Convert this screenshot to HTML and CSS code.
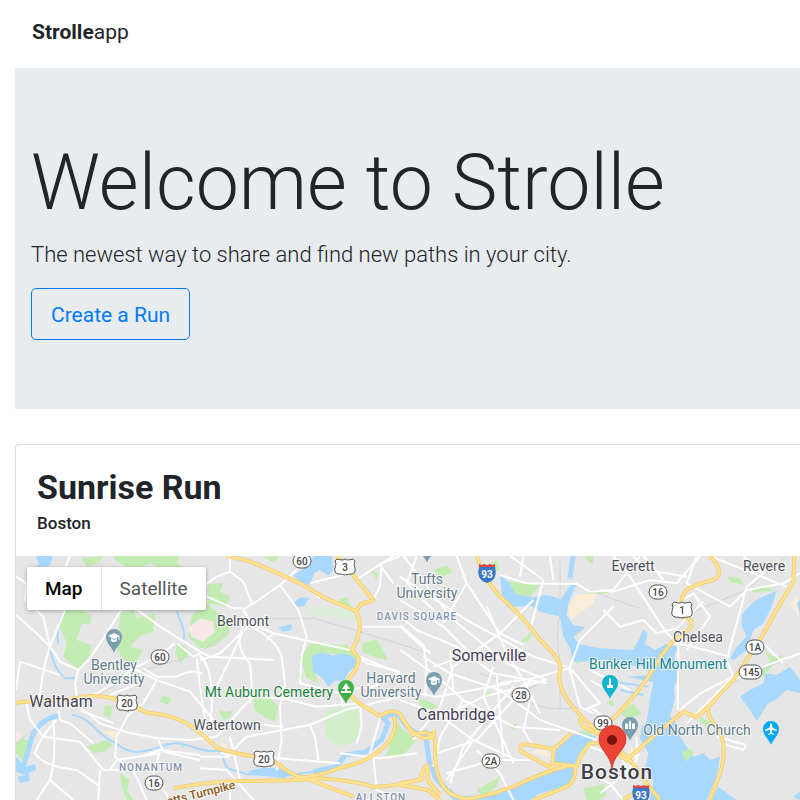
FILE: index.html
```html
<!DOCTYPE html>
<html lang="en">
<head>
<meta charset="utf-8">
<meta name="viewport" content="width=device-width, initial-scale=1">
<title>Strolleapp</title>
<link rel="stylesheet" href="styles.css">
</head>
<body>
<header class="navbar"><a class="brand" href="#"><strong>Strolle</strong>app</a></header>
<main class="content">
  <section class="hero">
    <h1 class="hero-title">Welcome to Strolle</h1>
    <p class="lead">The newest way to share and find new paths in your city.</p>
    <button class="btn" type="button">Create a Run</button>
  </section>
  <article class="card">
    <div class="card-head">
      <h2 class="card-title">Sunrise Run</h2>
      <p class="card-city">Boston</p>
    </div>
    <div class="map">
      <svg class="map-canvas" viewBox="16 556 784 244" preserveAspectRatio="xMinYMin slice" role="img" aria-label="Map of Boston">
        <defs>
          <path id="drop" d="M0 16C-1 11-8 7-8 0A8 8 0 0 1 8 0C8 7 1 11 0 16Z"/>
          <g id="school"><use href="#drop" fill="#7b9eb0"/><path d="M-6-1L0-4L6-1L0 2ZM-3 1L0 3L3 1V4Q0 6-3 4Z" fill="#fff"/><path d="M5-1V3" stroke="#fff"/></g>
          <path id="us" d="M-8-8Q-5-7-2-7L0-8L2-7Q5-7 8-8L10-6Q8-3 10 1Q11 6 7 7Q3 7 0 8Q-3 7-7 7Q-11 6-10 1Q-8-3-10-6Z" fill="#fff" stroke="#555"/>
          <g id="interstate"><path d="M-8-5H8Q11 8 0 11Q-11 8-8-5Z" fill="#3a77c8"/><path d="M-8-8L-5-7L-3-8L0-7L3-8L5-7L8-8V-5H-8Z" fill="#d94545"/></g>
          <g id="roads-yellow">
            <path d="M680 48C760 60 820 95 900 130C930 145 950 165 1000 185L1068 213"/>
            <path d="M1010 48L1070 118L1120 180L1082 193L1068 213Q1085 250 1078 270Q1072 310 1055 328L1077 355Q1075 385 1045 418L1035 450L1080 492L1140 528L1165 515Q1195 510 1205 530Q1230 580 1270 594Q1310 595 1300 570"/>
            <path d="M1430 48Q1450 115 1500 170Q1570 230 1620 300Q1680 355 1682 385Q1665 430 1710 490Q1740 530 1790 570L1890 660L1940 730L1980 780"/>
            <path d="M48 488L110 482Q200 480 250 470Q330 462 380 492Q410 500 440 518Q500 520 560 550Q620 590 650 624Q700 640 770 650Q830 660 850 685Q900 720 950 720"/>
            <path d="M520 745Q620 725 720 723Q850 725 960 715Q1050 720 1120 740Q1190 740 1270 715"/>
            <path d="M880 715Q960 710 1020 683Q1120 665 1170 600Q1195 555 1180 530"/>
            <path d="M930 720L1060 770"/><path d="M1200 525L1240 585Q1290 565 1307 600Q1300 680 1320 720Q1340 770 1400 777Q1450 772 1540 740Q1600 710 1660 690Q1720 670 1730 680Q1740 640 1770 610L1810 610"/>
            <path d="M1655 685L1562 633Q1555 610 1580 613L1662 627L1655 685M1662 627L1715 580M1655 670L1725 678Q1730 720 1700 740L1600 780"/>
            <path d="M1200 730L1260 720Q1270 680 1282 675V720L1320 765M1200 735L1285 750L1320 780"/>
            <path d="M2130 48Q2180 100 2140 120Q2080 135 2060 150Q2035 175 2048 230Q2095 240 2060 275Q2010 300 1970 370Q1925 450 1840 535L1790 565"/>
            <path d="M2383 48L2380 125L2330 210L2280 300L2200 420L2125 500L2090 532L2050 515L1970 580L1880 660L1800 610M2125 500Q2120 530 2155 570Q2185 620 2160 700L2130 780"/>
            <path d="M1750 530Q1730 540 1750 560L1810 590M1870 780L1910 755"/>
          </g>
        </defs>
        <rect class="land" x="0" y="540" width="800" height="280"/>
        <g class="terrain" transform="translate(0 540) scale(.3333333)">
          <g class="park">
            <path d="M245 55L310 48L300 65L260 80ZM340 48H540L530 70L560 85L470 80L450 70L400 90L350 65Z"/>
            <path d="M195 210L240 205L275 230L270 255L245 250L230 300L275 315L270 345L235 390L190 350L200 310L175 250ZM360 220L400 210L410 235L465 220L460 275L415 290L390 320L430 330L400 375L370 360L350 320L355 285ZM530 305L555 320L570 340L540 370L525 340ZM485 465L515 475L505 495L480 485ZM315 495L340 500L330 535L310 525ZM48 590L85 600L90 650L70 665L48 640ZM260 620L320 600L340 615L310 635L280 640ZM360 700L390 720L380 750L400 780H380L365 745ZM610 180L690 250L685 285L640 320L600 325L565 290L575 230ZM540 605L560 615L545 625Z"/>
            <path d="M625 132L670 128L660 155L690 170L675 200L625 190ZM790 50L840 48L820 68ZM660 395L680 390L670 410ZM655 510L680 515L700 510L690 530L670 540ZM760 470L800 465L835 500L825 545L790 530L765 510ZM930 310L1040 315L1065 335L1070 360L1030 345L980 340L945 345L940 380L955 430L920 415L900 350ZM1015 180L1040 170L1055 200L1030 200ZM1090 310L1130 298L1165 360L1120 350L1085 335ZM1190 545L1230 600L1210 650L1155 650L1175 600ZM890 400L910 405L900 430ZM1110 85L1135 100L1130 120Z"/>
            <path d="M1300 90L1340 75L1360 95L1325 110ZM1450 80L1490 60L1500 90L1470 100ZM1510 120L1560 130L1620 135L1590 170L1550 170L1520 155ZM1560 305L1600 270L1585 305ZM1250 470L1290 485L1320 505L1270 510ZM1445 460L1475 455L1470 470L1450 475ZM1525 560L1550 550L1545 570ZM1430 750L1500 710L1490 740L1450 770ZM1720 580L1790 565L1770 590ZM1750 50L1780 48V75ZM1765 150H1825V160H1765ZM1200 560L1250 600L1215 640L1200 635ZM1750 745L1810 735L1820 770L1760 780ZM1720 350L1745 355L1730 375Z"/>
            <path d="M1770 150H1810V162H1770ZM1900 320L1920 300L1945 330L1960 350L1910 340ZM1860 520L1900 490L1925 525L1880 535ZM2180 110L2220 115L2230 135L2190 125ZM2235 145L2290 140L2325 150L2270 158ZM2295 330L2320 350L2350 345L2320 375L2290 410L2285 390L2310 370ZM2100 530L2130 545L2125 565L2100 545ZM1820 490L1840 480V500ZM1770 745L1815 730L1800 780H1770Z"/>
          </g>
          <path class="meadow" d="M930 200L1030 205L1080 225L1070 240L970 230L910 220Z"/>
          <path class="cemetery" d="M975 515L1030 500L1080 515L1075 600L1020 620L975 590Z"/>
          <path class="sand" d="M1705 200L1730 165L1790 160L1780 190L1710 240ZM300 570L355 575L345 595ZM2370 190L2395 170V230ZM660 600L685 620L670 635ZM1880 630L1900 620V660ZM1600 630L1640 630L1650 650L1600 640Z"/>
          <path class="blush" d="M600 235L640 245L645 275L610 305L575 290L565 265ZM48 570L65 580L60 605H48Z"/>
          <g class="water">
            <path d="M108 48H160L150 75L130 85L122 103L103 95L117 72ZM48 650L75 680L105 672L108 690L85 700L90 722L60 730L52 710L75 705L48 695Z"/>
            <path d="M880 105L905 90L935 62L940 48H995L1000 90L985 107L960 90L942 100L930 135L905 130ZM885 185Q900 165 928 175L915 195Q900 205 885 195ZM835 262L875 252V270L848 275ZM935 350Q960 330 1000 347Q1025 330 1067 357L1070 375L1043 400L1035 422H1005L985 440L968 415L940 395ZM738 695L790 683L840 685L875 705L850 715L780 705Z"/>
            <path d="M1500 105L1530 130L1545 162L1600 172L1640 165L1683 177L1715 130L1730 132L1705 190L1700 225L1720 255L1755 262L1722 290L1735 312L1800 325L1900 330L1912 310L1930 268L1943 280L1935 312L1965 330L2000 312L2035 320L2022 350L2038 400L2022 445L2025 475L2010 530L2030 550L2040 590L2060 620L2080 650L2110 640L2130 660L2160 650L2150 710L2120 780H1950L1960 725L1935 690L1945 640L1920 595L1925 560L1940 545L1950 480L1960 425L1880 410L1960 405L1930 380L1880 375L1820 360L1740 365L1718 362L1710 325L1690 290L1680 230L1620 215L1595 198L1520 200L1505 160Z"/>
            <path d="M1655 640L1705 585L1750 580L1790 590L1740 635L1722 678L1718 725L1680 745L1620 760L1590 780H1460L1550 735L1650 690L1725 675L1660 665Z"/>
            <path d="M2225 225L2260 185L2300 165L2330 152L2315 200L2290 250L2260 270L2240 330L2200 360L2190 355L2210 320L2240 290L2225 255ZM2220 470L2250 450L2290 430L2295 400L2330 405L2370 380L2400 420V460L2360 450L2335 475L2305 490L2270 542L2250 510ZM2155 740L2210 780H2130ZM2380 770L2400 755V780ZM2390 190L2400 180V220Z"/>
          </g>
          <path class="park" d="M2045 635L2070 625L2080 640L2060 665L2050 650Z"/>
          <g class="river">
            <path class="river-wide" d="M175 527C140 533 110 555 94 595C85 635 78 650 70 680M1719 48L1710 115M1345 750L1370 777L1500 770M940 695L1010 680L1035 645L1100 635L1145 598L1165 550L1150 535Q1190 508 1210 545Q1240 590 1275 577L1287 660L1307 715L1365 775"/>
            <path d="M215 525C270 530 290 580 330 600C360 615 380 640 420 635C470 630 480 615 520 610C560 605 600 640 655 632C675 640 665 670 685 685L740 702L850 708L940 695M195 210Q165 260 175 310M150 330Q165 390 190 410M530 215Q560 280 550 300M190 415H230M1840 425L1945 440M1860 450L1930 465"/>
          </g>
          <g class="rail"><path d="M48 610Q100 570 120 550M290 465Q400 410 450 385L600 340L690 270M805 235H940L1080 275L1270 335M1440 400Q1540 430 1570 480Q1640 520 1760 500M1680 60V220Q1665 290 1680 370V510M1500 490L1620 430M1770 150Q1870 190 1920 205M2020 240L2240 150L2360 48M2190 430L2400 340"/></g>
          <g class="street">
            <path d="M210 48L195 85L205 100M48 110L80 130L75 180L130 230L150 320M48 225L110 280L150 320L180 365L235 390L225 430L235 500M195 210L150 320Q125 390 115 510M370 200L300 310L270 355L235 390M60 365L180 405M60 365L48 450M80 490L90 540L130 590L240 605L310 690H450M170 540Q120 590 105 640Q130 680 230 690L300 740M175 510L180 540L210 550L280 610M160 540Q170 650 150 720L110 780M150 720L220 780M300 690L295 780M240 500L300 550L390 580L475 595L570 600L650 590"/>
            <path d="M250 480Q340 440 400 385Q480 350 525 310M400 200L480 260L600 335L630 350L820 360M530 310L580 350L600 340M600 345Q650 400 630 560M590 355L600 440L620 570M400 385L470 420L430 490L385 525L350 590L345 650L405 700L440 780M470 420L570 455L640 540M430 385L470 410H530Q580 385 605 400M475 600L490 635L600 660M420 650L480 630L600 645M330 690L350 660L480 640M480 635L460 700L510 780M330 465L430 425M240 510L340 550"/>
            <path d="M600 145L650 110L690 95L730 125L755 190L730 210L755 250L820 280L1050 330M690 48V95M600 160L700 205H730M755 195L840 135L890 90M840 135L895 210L920 290L905 350L900 430M755 250L660 340L600 360M755 260Q830 300 845 350L855 430L840 500L845 610M730 260Q700 320 750 370L755 430L750 490M820 280L800 300M730 270Q700 340 630 480M930 130L1050 100M930 150L960 175M1070 118L1180 48M1140 75L1180 130M1120 180L1140 140L1145 70L1200 48M1085 260H1200L1290 340M1055 330L1080 350L1200 400M1075 350L1100 370L1200 395"/>
            <path d="M720 470L850 475L950 500L1080 490M680 650L740 590L930 555L1035 510L1200 470M650 590L730 500L760 470M740 550L850 560M845 600L830 690M690 590L720 720M930 555L945 590L955 660M660 640L1020 670M1020 640L1140 655L1250 640M1080 490L1085 560L1070 610M1140 535L1110 640M1120 650L1130 750L1200 780M600 650L690 650M600 685L680 690L760 780M690 730V780M1020 450L1120 440L1200 400M900 430L1020 460L1030 500"/>
            <path d="M1210 48L1360 240L1520 370L1640 420M1250 48L1220 130L1300 210M1200 110L1400 240L1600 350L1700 380M1200 180L1330 260L1420 350M1200 230L1250 270L1370 320L1480 400L1640 430M1370 48L1400 130L1330 250M1400 130L1500 280L1570 315M1460 200L1520 340L1570 420L1620 520M1530 48L1590 90L1630 120L1590 270M1570 48L1560 110M1500 105L1580 130L1730 132L1770 155L1840 150M1660 120L1650 48M1840 200L1740 300L1708 385L1600 415L1500 430M1708 385L1740 500L1780 520M1715 390L1800 490L1750 510M1200 255L1270 315L1280 380L1275 470M1270 350L1350 400L1500 450L1620 540L1790 600"/>
            <path d="M1200 330L1300 400L1390 480L1540 560L1680 570M1200 480L1310 520L1420 600L1550 660M1200 450L1310 470L1530 430M1240 600L1320 500L1360 380L1500 280L1600 180M1390 480L1320 590L1300 680M1420 600L1340 720M1480 380L1450 470L1540 670M1540 440L1390 620L1350 730M1330 530L1450 470L1640 420M1310 640L1430 600L1540 480M1430 630L1500 700L1540 780M1340 700L1480 660L1590 660M1490 400L1510 650M1590 480L1570 570L1600 620M1350 330L1360 450M1300 380L1420 340L1520 360M1560 440L1600 420"/>
            <path d="M1800 150L1840 155L1950 120L2030 130L2100 48M1840 48L1890 110L2000 280L2035 310M1840 150L1920 48M1900 48L1940 90L2060 110M1810 210L1860 260L1930 240L1970 280L2030 265L2110 185M1930 48L1990 120M2090 50L2060 130L2190 200L2240 150L2350 130L2400 100M2030 190L2080 160L2130 230M2130 48L2260 100L2360 140M2230 48L2290 100L2240 140L2180 360L2200 410L2100 460L2040 510M2020 310L2080 320L2190 350M2060 270L2035 320L2033 510M2130 230L2060 330M2290 310L2350 370M2200 420L2290 380L2400 340M2200 410L2060 550M2150 590L2220 610Q2245 610 2230 630L2160 610M1770 390L1890 450M1770 420L1840 460M1770 500L1810 530M1880 690L1910 660V590M1770 620L1850 650L1920 645M1770 700L1830 730L1870 780M1800 760L1890 690L1940 700M1850 600L1880 690"/>
          </g>
          <use href="#roads-yellow" class="highway-case"/>
          <use href="#roads-yellow" class="highway"/>
        </g>
        <g class="markers">
          <use href="#school" x="114" y="637"/><use href="#school" x="434" y="680"/><use href="#school" x="427" y="547"/>
          <g transform="translate(346 688)"><use href="#drop" fill="#43b04a"/><path d="M0-5L4 1H1V3H5V5H-5V3H-1V1H-4Z" fill="#fff"/></g>
          <g transform="translate(610 683)"><use href="#drop" fill="#12b5cb"/><path d="M0-6L1-3V2H3V5H-3V2H-1V-3Z" fill="#fff"/></g>
          <g transform="translate(630 725)"><use href="#drop" fill="#7b9eb0"/><path d="M-5 4V-1L-4-2L-2-1V4M-1 4V-3L0-5L1-3V4M2 4V-1L4-2L5-1V4Z" fill="#fff"/></g>
          <g transform="translate(771 729)"><use href="#drop" fill="#03a9f4"/><path d="M0-6L1-5V-2L6 1V2L1 1V4L3 5V6L0 5L-3 6V5L-1 4V1L-6 2V1L-1-2V-5Z" fill="#fff"/></g>
          <use href="#us" x="345" y="567"/><use href="#us" x="127" y="703"/><use href="#us" x="264" y="759"/><use href="#us" x="682" y="610"/>
          <use href="#interstate" x="487" y="572"/><use href="#interstate" x="641" y="793"/>
          <g class="oval"><rect x="151" y="650" width="18" height="14" rx="7"/><rect x="293" y="554" width="18" height="14" rx="7"/><rect x="145" y="776" width="18" height="14" rx="7"/><rect x="512" y="688" width="18" height="14" rx="7"/><rect x="482" y="754" width="18" height="14" rx="7"/><rect x="594" y="716" width="18" height="14" rx="7"/><rect x="649" y="585" width="18" height="14" rx="7"/><rect x="746" y="640" width="18" height="14" rx="7"/><rect x="739" y="665" width="23" height="14" rx="7"/></g>
        </g>
        <g class="route">
          <text x="160" y="661">60</text><text x="302" y="565">60</text><text x="345" y="571">3</text><text x="127" y="707">20</text><text x="264" y="763">20</text><text x="154" y="787">16</text><text x="521" y="699">28</text><text x="491" y="765">2A</text><text x="603" y="727">99</text><text x="658" y="596">16</text><text x="682" y="614">1</text><text x="755" y="651">1A</text><text x="751" y="676">145</text>
          <text class="on-blue" x="487" y="578">93</text><text class="on-blue" x="641" y="799">93</text>
        </g>
        <g class="label">
          <text x="243" y="626">Belmont</text><text x="227" y="730">Watertown</text><text x="633" y="571">Everett</text><text x="764" y="571">Revere</text><text x="698" y="642">Chelsea</text>
          <g class="town"><text x="61" y="707">Waltham</text><text x="489" y="661">Somerville</text><text x="456" y="720">Cambridge</text></g>
          <g class="poi"><text x="114" y="670">Bentley</text><text x="114" y="684">University</text><text x="427" y="584">Tufts</text><text x="427" y="598">University</text><text x="391" y="683">Harvard</text><text x="391" y="697">University</text><text x="697" y="735">Old North Church</text></g>
          <text class="green" x="269" y="697">Mt Auburn Cemetery</text><text class="teal" x="658" y="669">Bunker Hill Monument</text>
          <g class="district"><text x="151" y="771">NONANTUM</text><text x="417" y="620">DAVIS SQUARE</text><text x="381" y="801">ALLSTON</text></g>
          <text class="turnpike" x="202" y="797" transform="rotate(-14 202 797)">etts Turnpike</text>
          <text class="city" x="617" y="779">Boston</text>
        </g>
        <path class="pin" d="M612 769C611 755 599 750 599 739A13 13 0 0 1 626 739C626 750 613 755 612 769Z"/><circle class="pin-dot" cx="612" cy="740" r="5"/>
      </svg>
      <div class="map-type"><button class="map-btn map-btn-active" type="button">Map</button><button class="map-btn" type="button">Satellite</button></div>
    </div>
  </article>
</main>
</body>
</html>
```
FILE: styles.css
```css
* { box-sizing: border-box; }
body { margin: 0; min-height: 100vh; display: flex; flex-direction: column; background: #fff; color: #212529; font-family: Roboto, sans-serif; font-size: 16px; }
.navbar { padding: 16px 32px 20px; }
.brand { display: block; color: #212529; font-size: 21px; line-height: 32px; text-decoration: none; }
.content { flex: 1; display: flex; flex-direction: column; gap: 35px; padding-left: 15px; }
.hero { background: #e9ecef; padding: 69px 16px; }
.hero-title { margin: 0 0 8px; font-size: 77px; font-weight: 300; line-height: 92px; }
.lead { margin: 0 0 15px; font-size: 22px; font-weight: 300; line-height: 36px; }
.btn { display: block; padding: 9px 19px 7px; border: 1px solid #007bff; border-radius: 5px; background: transparent; color: #007bff; font: 400 21px/34px Roboto, sans-serif; }
.card { flex: 1; display: flex; flex-direction: column; border: 1px solid #dfdfdf; border-width: 1px 0 0 1px; border-radius: 4px 0 0 0; }
.card-head { padding: 20px 21px 19px; }
.card-title { margin: 0; font-size: 34px; font-weight: 700; line-height: 44px; }
.card-city { margin: 0; font-size: 17px; font-weight: 500; line-height: 28px; }
.map { flex: 1; min-height: 240px; position: relative; overflow: hidden; }
.map-canvas { position: absolute; inset: 0; width: 100%; height: 100%; }
.map-type { position: absolute; top: 11px; left: 11px; display: flex; background: #fff; border-radius: 2px; box-shadow: 0 1px 4px rgba(0, 0, 0, .3); }
.map-btn { padding: 0 18px; border: 0; background: none; color: #565656; font: 400 19px/43px Roboto, sans-serif; }
.map-btn-active { border-right: 1px solid #e8e8e8; color: #000; font-weight: 500; }

.land { fill: #e6e6e6; }
.park { fill: #c3ecb2; }
.meadow { fill: #dceedb; }
.cemetery { fill: #d2efca; }
.sand { fill: #fbeed8; }
.blush { fill: #f8e8e9; }
.water { fill: #a9d8ff; }
.river { fill: none; stroke: #a9d8ff; stroke-width: 6; }
.river-wide { stroke-width: 15; }
.rail { fill: none; stroke: #d2d3d6; stroke-width: 3; }
.street { fill: none; stroke: #fff; stroke-width: 6; stroke-linejoin: round; }
.highway-case, .highway { fill: none; stroke-linejoin: round; }
.highway-case { stroke: #f4cd72; stroke-width: 12; }
.highway { stroke: #ffe391; stroke-width: 7; }
.oval { fill: #fff; stroke: #555; }
.route { fill: #444; font-size: 10px; font-weight: 500; text-anchor: middle; }
.route .on-blue { fill: #fff; font-size: 10px; font-weight: 700; }
.label { fill: #4c4f58; font-size: 14px; text-anchor: middle; paint-order: stroke; stroke: rgba(255, 255, 255, .8); stroke-width: 2; stroke-linejoin: round; }
.town { fill: #443f55; font-size: 16px; }
.poi { fill: #5f7a8a; }
.green { fill: #188038; }
.teal { fill: #12858d; }
.district { fill: #8090ac; font-size: 10px; font-weight: 500; letter-spacing: 1px; }
.turnpike { fill: #8d5a1a; font-size: 12px; font-weight: 500; }
.city { fill: #3d4148; font-size: 21px; font-weight: 500; letter-spacing: 1px; }
.pin { fill: #ea4335; stroke: #d23b2f; }
.pin-dot { fill: #7d120c; }
```
